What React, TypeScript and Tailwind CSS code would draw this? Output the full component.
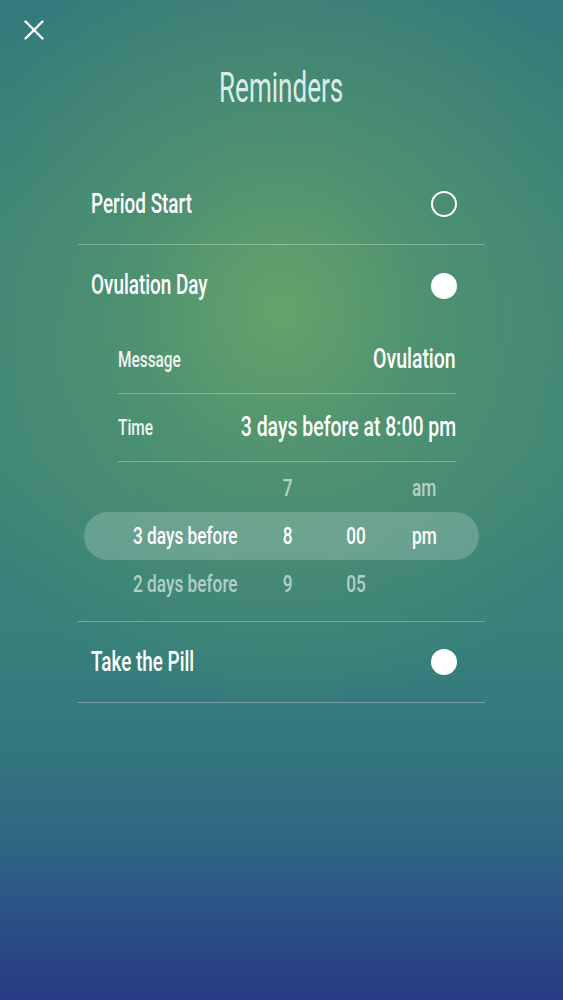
import React from "react";

function Cond({ children, className }: { children: React.ReactNode; className: string }) {
  return <span className={"inline-block whitespace-nowrap " + className}>{children}</span>;
}

function Toggle({ on }: { on: boolean }) {
  return on ? (
    <span className="block h-[26px] w-[26px] rounded-full bg-white" />
  ) : (
    <span className="block h-[26px] w-[26px] rounded-full border-[2.5px] border-white" />
  );
}

function MainRow({ label, on, border }: { label: string; on: boolean; border: boolean }) {
  return (
    <div
      className={
        "flex h-[81px] items-center justify-between pl-[13px] pr-[28px] " +
        (border ? "border-b border-white/30" : "")
      }
    >
      <Cond className="origin-left scale-x-[0.7] text-[27px] font-medium leading-none text-white">{label}</Cond>
      <Toggle on={on} />
    </div>
  );
}

function DetailRow({ label, value }: { label: string; value: string }) {
  return (
    <div className="flex h-[68px] items-center border-b border-white/30">
      <Cond className="shrink-0 origin-left scale-x-[0.7] text-[22px] font-medium leading-none text-[#eef6f2]">{label}</Cond>
      <div className="flex min-w-0 flex-1 justify-end">
        <Cond className="shrink-0 origin-right scale-x-[0.72] text-[27px] font-medium leading-none text-white">{value}</Cond>
      </div>
    </div>
  );
}

export default function App() {
  return (
    <div className="min-h-screen w-full bg-[image:radial-gradient(ellipse_65%_40%_at_50%_31%,rgba(104,165,106,0.95)_0%,rgba(88,152,108,0.65)_40%,rgba(70,140,115,0)_100%),linear-gradient(180deg,#347a7b_0%,#3b8479_25%,#3d8678_45%,#377f7b_65%,#33767e_75%,#2f6783_84%,#2b5086_92%,#283a82_100%)] font-['Roboto',sans-serif] text-white">
      <div className="pl-6 pt-5">
        <svg width="20" height="20" viewBox="0 0 20 20" className="block">
          <path d="M1.5 1.5 L18.5 18.5 M18.5 1.5 L1.5 18.5" stroke="white" strokeWidth="2.4" strokeLinecap="round" />
        </svg>
      </div>
      <h1 className="mt-[28px] text-center text-[42px] font-normal leading-[40px] text-[#d9ede6]">
        <Cond className="origin-center scale-x-[0.62]">Reminders</Cond>
      </h1>

      <div className="ml-[78px] mt-[56px] w-[407px]">
        <MainRow label="Period Start" on={false} border />

        <div className="border-b border-white/30 pb-[13px]">
          <MainRow label="Ovulation Day" on border={false} />
          <div className="ml-[40px] mr-[29px]">
            <DetailRow label="Message" value="Ovulation" />
            <DetailRow label="Time" value="3 days before at 8:00 pm" />
          </div>

          <div className="mx-[6px] pt-[2px]">
            <div className="grid h-[48px] grid-cols-[107px_40px_40px_40px] items-center gap-x-[28px] pl-[49px] text-[23px] font-medium leading-none text-white/60">
              <span />
              <Cond className="origin-center scale-x-[0.75] justify-self-center">7</Cond>
              <span />
              <Cond className="origin-center scale-x-[0.75] justify-self-center">am</Cond>
            </div>
            <div className="grid h-[48px] grid-cols-[107px_40px_40px_40px] items-center gap-x-[28px] rounded-full bg-white/20 pl-[49px] text-[23px] font-medium leading-none text-white">
              <Cond className="origin-left scale-x-[0.75] justify-self-start">3 days before</Cond>
              <Cond className="origin-center scale-x-[0.75] justify-self-center">8</Cond>
              <Cond className="origin-center scale-x-[0.75] justify-self-center">00</Cond>
              <Cond className="origin-center scale-x-[0.75] justify-self-center">pm</Cond>
            </div>
            <div className="grid h-[48px] grid-cols-[107px_40px_40px_40px] items-center gap-x-[28px] pl-[49px] text-[23px] font-medium leading-none text-white/60">
              <Cond className="origin-left scale-x-[0.75] justify-self-start">2 days before</Cond>
              <Cond className="origin-center scale-x-[0.75] justify-self-center">9</Cond>
              <Cond className="origin-center scale-x-[0.75] justify-self-center">05</Cond>
              <span />
            </div>
          </div>
        </div>

        <MainRow label="Take the Pill" on border />
      </div>
    </div>
  );
}
